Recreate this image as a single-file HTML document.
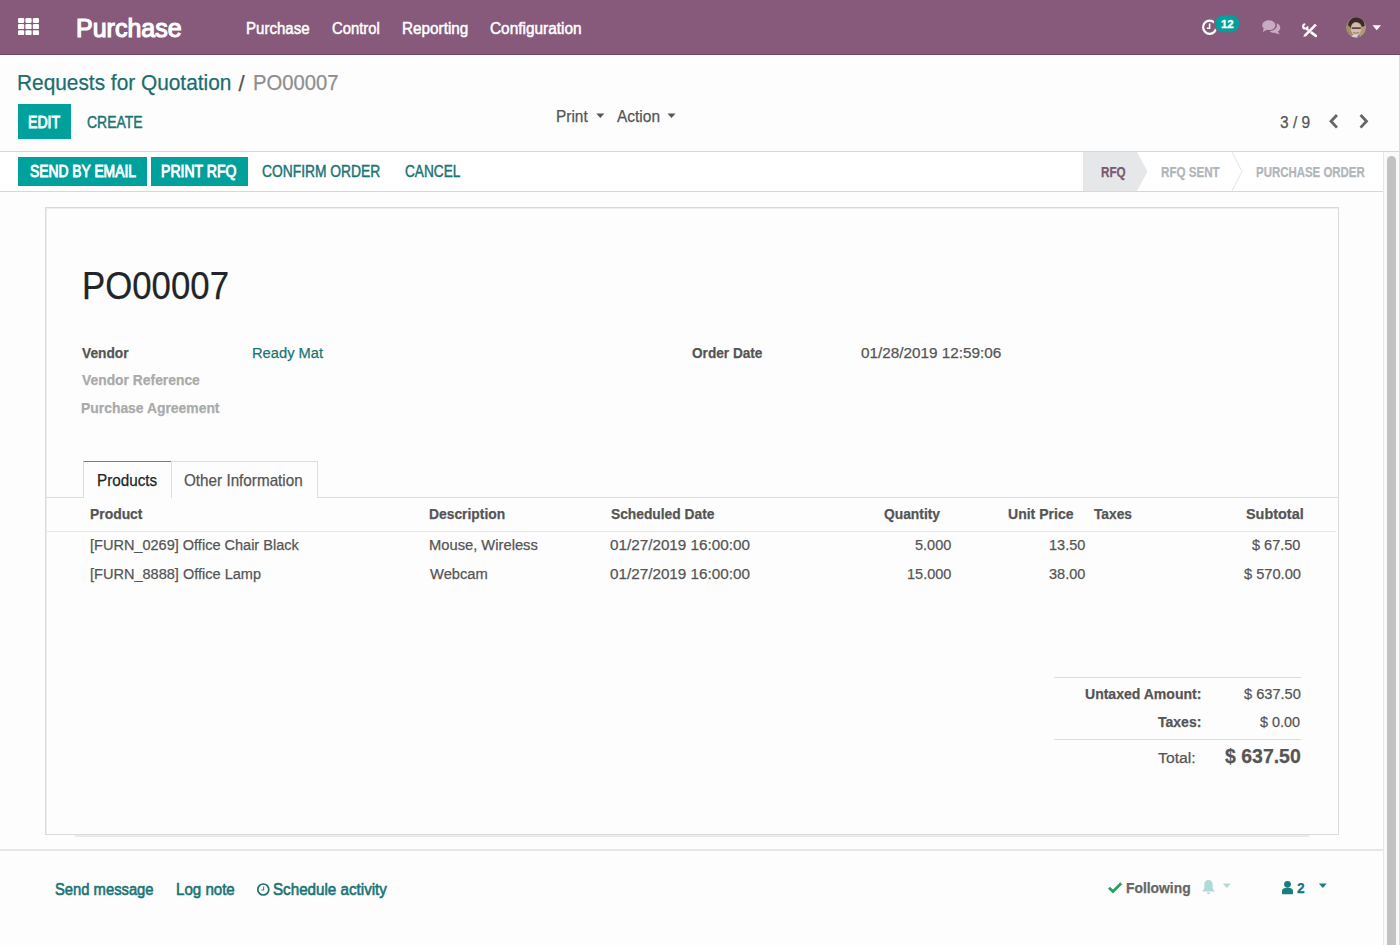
<!DOCTYPE html>
<html><head><meta charset="utf-8">
<style>
*{box-sizing:border-box;margin:0;padding:0}
html,body{width:1400px;height:945px;overflow:hidden;background:#fdfdfd;font-family:"Liberation Sans",sans-serif;color:#4c4c4c}
.a{position:absolute}
.t{position:absolute;white-space:nowrap;line-height:1;transform-origin:0 0;-webkit-text-stroke:0.25px currentColor}
.b{font-weight:bold}
.btn{position:absolute;background:#00a09d}
.hl{position:absolute;height:1px}
.vl{position:absolute;width:1px}
</style></head><body>
<!-- navbar -->
<div class="a" style="left:0;top:0;width:1400px;height:55px;background:#875a7b;border-bottom:1px solid #6b4a63"></div>
<svg class="a" style="left:18px;top:18px" width="21" height="17.2" viewBox="0 0 21 17.2"><g fill="#fff"><rect x="0.0" y="0.0" width="6.2" height="5" rx="1.2"/><rect x="7.4" y="0.0" width="6.2" height="5" rx="1.2"/><rect x="14.8" y="0.0" width="6.2" height="5" rx="1.2"/><rect x="0.0" y="6.1" width="6.2" height="5" rx="1.2"/><rect x="7.4" y="6.1" width="6.2" height="5" rx="1.2"/><rect x="14.8" y="6.1" width="6.2" height="5" rx="1.2"/><rect x="0.0" y="12.2" width="6.2" height="5" rx="1.2"/><rect x="7.4" y="12.2" width="6.2" height="5" rx="1.2"/><rect x="14.8" y="12.2" width="6.2" height="5" rx="1.2"/></g></svg>
<!-- right icons -->
<svg class="a" style="left:1200px;top:12px" width="45" height="26" viewBox="0 0 45 26">
<circle cx="9.7" cy="15.2" r="6.6" fill="none" stroke="#fff" stroke-width="2.2"/>
<path d="M9.6 11.5 V16.3 H6.8" fill="none" stroke="#fff" stroke-width="1.6"/>
<rect x="14.3" y="2.6" width="25.7" height="18.3" rx="9.1" fill="#00a09d" stroke="#875a7b" stroke-width="1.2"/>
<text x="27.2" y="16.4" text-anchor="middle" font-family="Liberation Sans" font-weight="bold" font-size="11.5" fill="#fff" stroke="#fff" stroke-width="0.4" letter-spacing="-0.2">12</text>
</svg>
<svg class="a" style="left:1261px;top:19px" width="21" height="18" viewBox="0 0 21 18">
<g fill="#c8aac1">
<ellipse cx="7.8" cy="6.2" rx="6.6" ry="4.9"/>
<path d="M2.6 9.5 L1.8 13 L6.5 10.5 Z"/>
<path d="M15.4 4.2 C18.3 5.1 19.7 7.3 19.2 9.6 C18.9 11 18 12 16.9 12.6 L18.7 15.6 L13.4 13.8 C11.2 14 9.5 13.3 8.5 12.1 C12.6 11.9 15.9 9.6 15.9 6.3 C15.9 5.6 15.7 4.8 15.4 4.2 Z"/>
</g></svg>
<svg class="a" style="left:1298px;top:18px" width="24" height="24" viewBox="0 0 24 24">
<path d="M9.2 11.2 L17.8 17.9" stroke="#fff" stroke-width="2.6" stroke-linecap="round" fill="none"/>
<circle cx="7.3" cy="8.4" r="3.2" fill="#fff"/>
<path d="M7.6 8.1 L6.9 3.8 L12 3.6 L11.9 8.6 Z" fill="#875a7b"/>
<circle cx="7.5" cy="8.2" r="1.2" fill="#875a7b"/>
<path d="M16.9 5.7 L18.8 7.6 L8.1 18.3 L5.4 19 L6.2 16.4 Z" fill="#fff" stroke="#875a7b" stroke-width="0.9" paint-order="stroke"/>
</svg>
<svg class="a" style="left:1346px;top:17px" width="20" height="21" viewBox="0 0 20 21">
<defs><clipPath id="av"><ellipse cx="10" cy="10.3" rx="9.9" ry="10.2"/></clipPath></defs>
<g clip-path="url(#av)">
<rect x="0" y="0" width="20" height="21" fill="#9b8468"/>
<rect x="13" y="6" width="7" height="12" fill="#b09a7c"/>
<rect x="0" y="9" width="6" height="10" fill="#a38c6e"/>
<path d="M2 8 C3 2 8 -0.5 12 0.5 C16 1.5 19 5 18.5 9 L16 10 C15 6 12 4.5 9 5 C6 5.5 5 8 5 11 Z" fill="#3a2b2b"/>
<ellipse cx="10" cy="12" rx="5.2" ry="6.5" fill="#d6bcb0"/>
<rect x="5.5" y="10.2" width="9.5" height="1.8" rx="0.8" fill="#5b4640"/>
<path d="M7 15.5 Q10 17 13 15.5" stroke="#8a6a60" stroke-width="0.9" fill="none"/>
<path d="M4 21 C5 18 8 17.5 10 17.5 C13 17.5 16 18.5 17 21 Z" fill="#d9d0d2"/>
<circle cx="13" cy="19.5" r="1.6" fill="#6f7890"/>
</g></svg>
<svg class="a" style="left:1372px;top:25px" width="10" height="6" viewBox="0 0 10 6"><path d="M0.5 0.3 H9 L4.75 5.2 Z" fill="#fff"/></svg>

<!-- EDIT button -->
<div class="btn" style="left:18px;top:104px;width:53px;height:35px"></div>
<!-- print/action carets -->
<svg class="a" style="left:596px;top:113px" width="9" height="6" viewBox="0 0 9 6"><path d="M0.3 0.5 H8.3 L4.3 5 Z" fill="#555"/></svg>
<svg class="a" style="left:667px;top:113px" width="9" height="6" viewBox="0 0 9 6"><path d="M0.5 0.5 H8.5 L4.5 5 Z" fill="#555"/></svg>
<!-- pager chevrons -->
<svg class="a" style="left:1327px;top:113px" width="12" height="17" viewBox="0 0 12 17"><path d="M9 3 L4 8.3 L9 13.6" fill="none" stroke="#666" stroke-width="2.8" stroke-linecap="square"/></svg>
<svg class="a" style="left:1358px;top:113px" width="12" height="17" viewBox="0 0 12 17"><path d="M3.5 3 L8.5 8.3 L3.5 13.6" fill="none" stroke="#666" stroke-width="2.8" stroke-linecap="square"/></svg>

<!-- content area -->
<div class="a" style="left:0;top:152px;width:1383px;height:793px;background:#fdfdfd"></div>
<div class="hl" style="left:0;top:151px;width:1400px;background:#d6d7da"></div>
<!-- statusbar -->
<div class="a" style="left:0;top:152px;width:1383px;height:39px;background:#fff"></div>
<div class="btn" style="left:18px;top:157px;width:129px;height:29px"></div>
<div class="btn" style="left:151px;top:157px;width:97px;height:29px"></div>
<svg class="a" style="left:1080px;top:152px" width="303" height="39" viewBox="0 0 303 39">
<path d="M3 0 H57 L67.5 19.5 L57 39 H3 Z" fill="#e6e7e9"/>
<path d="M152 0 L162 19.5 L152 39" fill="none" stroke="#e3e4e6" stroke-width="1"/>
</svg>
<div class="hl" style="left:0;top:191px;width:1383px;background:#d6d7da"></div>
<!-- scrollbar -->
<div class="vl" style="left:1383px;top:152px;height:793px;background:#e8e8e8"></div>
<div class="a" style="left:1384px;top:152px;width:16px;height:793px;background:#fafafa"></div>
<div class="a" style="left:1387px;top:156px;width:9px;height:800px;border-radius:5px;background:#c2c2c2"></div>
<div class="vl" style="left:1399px;top:55px;height:890px;background:#dcdcdc"></div>

<!-- sheet -->
<div class="a" style="left:45px;top:207px;width:1294px;height:628px;border:1px solid #d9dadd;box-shadow:inset 1px 1px 0 #eeeef0;background:#fdfdfd"></div>
<div class="hl" style="left:75px;top:835px;width:1234px;height:2px;background:linear-gradient(#f0f0f2,#e4e5e7)"></div>
<!-- tabs -->
<div class="hl" style="left:46px;top:497px;width:1292px;background:#dcdde0"></div>
<div class="a" style="left:83px;top:461px;width:89px;height:37px;background:#fdfdfd;border:1px solid #d9dadd;border-bottom:none;border-top:1px solid #85738a"></div>
<div class="a" style="left:171px;top:461px;width:147px;height:37px;border:1px solid #dcdde0;border-bottom:none;background:#fdfdfd"></div>
<div class="hl" style="left:46px;top:531px;width:1290px;background:#e6e7e9"></div>
<!-- totals lines -->
<div class="hl" style="left:1054px;top:677px;width:247px;background:#d8dddd"></div>
<div class="hl" style="left:1054px;top:739px;width:247px;background:#d8dddd"></div>

<!-- chatter -->
<div class="a" style="left:0;top:849px;width:1383px;height:2px;background:#e6e7e8"></div>
<svg class="a" style="left:256px;top:882px" width="15" height="15" viewBox="0 0 15 15">
<circle cx="7.3" cy="7.5" r="5.5" fill="none" stroke="#1a6e70" stroke-width="1.7"/>
<path d="M7.6 4.6 V8 H5.2" fill="none" stroke="#4f8384" stroke-width="1.2"/>
</svg>
<svg class="a" style="left:1107px;top:881px" width="16" height="13" viewBox="0 0 16 13"><path d="M2 6.8 L6 10.6 L14.2 2.2" fill="none" stroke="#28a060" stroke-width="2.8"/></svg>
<svg class="a" style="left:1201px;top:879px" width="15" height="16" viewBox="0 0 15 16"><path d="M7.5 1 C4.5 1 3.3 3.3 3.3 6 V9.6 L1.2 12.6 H13.8 L11.7 9.6 V6 C11.7 3.3 10.5 1 7.5 1 Z M5.8 13.5 A1.7 1.7 0 0 0 9.2 13.5 Z" fill="#b2d9d8"/></svg>
<svg class="a" style="left:1222px;top:883px" width="10" height="6" viewBox="0 0 10 6"><path d="M0.8 0.6 H8.8 L4.8 5 Z" fill="#b2d9d8"/></svg>
<svg class="a" style="left:1281px;top:880px" width="13" height="15" viewBox="0 0 13 15"><g fill="#17807f"><circle cx="6.5" cy="4.3" r="3.4"/><path d="M1 13.6 V11 C1 8.8 3 7.7 6.5 7.7 C10 7.7 12 8.8 12 11 V13.6 Q12 14.3 11.3 14.3 H1.7 Q1 14.3 1 13.6 Z"/></g></svg>
<svg class="a" style="left:1318px;top:883px" width="10" height="6" viewBox="0 0 10 6"><path d="M0.8 0.6 H8.8 L4.8 5 Z" fill="#17807f"/></svg>

<span id="brand" class="t" style="left:76.25px;top:15px;font-size:26px;letter-spacing:0.000px;transform:scaleX(0.9624);-webkit-text-stroke-width:1.2px;color:#fff">Purchase</span>
<span id="menu1" class="t" style="left:245.60px;top:21px;font-size:16px;letter-spacing:0.000px;transform:scaleX(0.9399);-webkit-text-stroke-width:0.5px;color:#fff">Purchase</span>
<span id="menu2" class="t" style="left:332.35px;top:21px;font-size:16px;letter-spacing:0.000px;transform:scaleX(0.9268);-webkit-text-stroke-width:0.5px;color:#fff">Control</span>
<span id="menu3" class="t" style="left:402.00px;top:21px;font-size:16px;letter-spacing:0.000px;transform:scaleX(0.9555);-webkit-text-stroke-width:0.5px;color:#fff">Reporting</span>
<span id="menu4" class="t" style="left:489.50px;top:21px;font-size:16px;letter-spacing:0.000px;transform:scaleX(0.9628);-webkit-text-stroke-width:0.5px;color:#fff">Configuration</span>
<span id="bc1" class="t" style="left:17.20px;top:72px;font-size:22px;letter-spacing:0.000px;transform:scaleX(0.9474);color:#1a6e70">Requests for Quotation</span>
<span id="bcs" class="t" style="left:238.60px;top:73px;font-size:22px;letter-spacing:0.000px;transform:scaleX(1.0000);color:#555">/</span>
<span id="bc2" class="t" style="left:252.62px;top:72px;font-size:22px;letter-spacing:0.000px;transform:scaleX(0.9213);color:#8f8f8f">PO00007</span>
<span id="edit" class="t" style="left:28.25px;top:115px;font-size:16px;letter-spacing:0.000px;transform:scaleX(0.8818);-webkit-text-stroke-width:0.9px;color:#fff">EDIT</span>
<span id="create" class="t" style="left:87.00px;top:115px;font-size:16px;letter-spacing:0.000px;transform:scaleX(0.8719);-webkit-text-stroke-width:0.45px;color:#1a7474">CREATE</span>
<span id="print" class="t" style="left:555.65px;top:109px;font-size:16px;letter-spacing:0.000px;transform:scaleX(0.9631);color:#555">Print</span>
<span id="action" class="t" style="left:617.00px;top:109px;font-size:16px;letter-spacing:0.000px;transform:scaleX(0.9665);color:#555">Action</span>
<span id="pager" class="t" style="left:1280.00px;top:115px;font-size:16px;letter-spacing:0.000px;transform:scaleX(0.9667);color:#555">3 / 9</span>
<span id="send" class="t" style="left:29.80px;top:164px;font-size:16px;letter-spacing:0.000px;transform:scaleX(0.8654);-webkit-text-stroke-width:0.9px;color:#fff">SEND BY EMAIL</span>
<span id="printrfq" class="t" style="left:161.25px;top:164px;font-size:16px;letter-spacing:0.000px;transform:scaleX(0.8791);-webkit-text-stroke-width:0.9px;color:#fff">PRINT RFQ</span>
<span id="confirm" class="t" style="left:262.35px;top:164px;font-size:16px;letter-spacing:0.000px;transform:scaleX(0.8642);-webkit-text-stroke-width:0.45px;color:#1a7474">CONFIRM ORDER</span>
<span id="cancel" class="t" style="left:405.00px;top:164px;font-size:16px;letter-spacing:0.000px;transform:scaleX(0.8533);-webkit-text-stroke-width:0.45px;color:#1a7474">CANCEL</span>
<span id="rfq" class="t b" style="left:1100.80px;top:165px;font-size:14px;letter-spacing:0.000px;transform:scaleX(0.8354);color:#7c5873">RFQ</span>
<span id="rfqsent" class="t b" style="left:1160.65px;top:165px;font-size:14px;letter-spacing:0.000px;transform:scaleX(0.8291);color:#b1b5ba">RFQ SENT</span>
<span id="po" class="t b" style="left:1255.65px;top:165px;font-size:14px;letter-spacing:0.000px;transform:scaleX(0.8177);color:#b1b5ba">PURCHASE ORDER</span>
<span id="title" class="t" style="left:81.80px;top:267px;font-size:38.5px;letter-spacing:0.000px;transform:scaleX(0.9036);color:#212529">PO00007</span>
<span id="vendor" class="t b" style="left:82.35px;top:345px;font-size:15.5px;letter-spacing:0.000px;transform:scaleX(0.8854);color:#555">Vendor</span>
<span id="readymat" class="t" style="left:251.65px;top:345px;font-size:15.5px;letter-spacing:0.000px;transform:scaleX(0.9487);color:#1a7474">Ready Mat</span>
<span id="vref" class="t b" style="left:82.40px;top:372px;font-size:15.5px;letter-spacing:0.000px;transform:scaleX(0.8938);color:#aaa">Vendor Reference</span>
<span id="pagr" class="t b" style="left:81.40px;top:400px;font-size:15.5px;letter-spacing:0.000px;transform:scaleX(0.8965);color:#aaa">Purchase Agreement</span>
<span id="odate" class="t b" style="left:691.80px;top:345px;font-size:15.5px;letter-spacing:0.000px;transform:scaleX(0.8793);color:#555">Order Date</span>
<span id="odval" class="t" style="left:861.00px;top:345px;font-size:15.5px;letter-spacing:0.000px;transform:scaleX(0.9871);color:#555">01/28/2019 12:59:06</span>
<span id="products" class="t" style="left:96.80px;top:472px;font-size:16.5px;letter-spacing:0.000px;transform:scaleX(0.9252);color:#212529">Products</span>
<span id="otherinfo" class="t" style="left:184.45px;top:472px;font-size:16.5px;letter-spacing:0.000px;transform:scaleX(0.9247);color:#555">Other Information</span>
<span id="h_product" class="t b" style="left:90.40px;top:506px;font-size:15.5px;letter-spacing:0.000px;transform:scaleX(0.8958);color:#555">Product</span>
<span id="h_desc" class="t b" style="left:428.80px;top:506px;font-size:15.5px;letter-spacing:0.000px;transform:scaleX(0.8939);color:#555">Description</span>
<span id="h_sched" class="t b" style="left:610.80px;top:506px;font-size:15.5px;letter-spacing:0.000px;transform:scaleX(0.8892);color:#555">Scheduled Date</span>
<span id="h_qty" class="t b" style="left:883.60px;top:506px;font-size:15.5px;letter-spacing:0.000px;transform:scaleX(0.8915);color:#555">Quantity</span>
<span id="h_up" class="t b" style="left:1008.00px;top:506px;font-size:15.5px;letter-spacing:0.000px;transform:scaleX(0.9053);color:#555">Unit Price</span>
<span id="h_tax" class="t b" style="left:1094.40px;top:506px;font-size:15.5px;letter-spacing:0.000px;transform:scaleX(0.8857);color:#555">Taxes</span>
<span id="h_sub" class="t b" style="left:1245.80px;top:506px;font-size:15.5px;letter-spacing:0.000px;transform:scaleX(0.9308);color:#555">Subtotal</span>
<span id="r1" class="t" style="left:90.45px;top:537px;font-size:15.5px;letter-spacing:0.000px;transform:scaleX(0.9368);color:#555">[FURN_0269] Office Chair Black</span>
<span id="r1d" class="t" style="left:428.80px;top:537px;font-size:15.5px;letter-spacing:0.000px;transform:scaleX(0.9499);color:#555">Mouse, Wireless</span>
<span id="r1s" class="t" style="left:609.80px;top:537px;font-size:15.5px;letter-spacing:0.000px;transform:scaleX(0.9840);color:#555">01/27/2019 16:00:00</span>
<span id="r1q" class="t" style="left:914.96px;top:537px;font-size:15.5px;letter-spacing:0.000px;transform:scaleX(0.9354);color:#555">5.000</span>
<span id="r1p" class="t" style="left:1048.96px;top:537px;font-size:15.5px;letter-spacing:0.000px;transform:scaleX(0.9354);color:#555">13.50</span>
<span id="r1sub" class="t" style="left:1252.00px;top:537px;font-size:15.5px;letter-spacing:0.000px;transform:scaleX(0.9354);color:#555">$ 67.50</span>
<span id="r2" class="t" style="left:90.45px;top:566px;font-size:15.5px;letter-spacing:0.000px;transform:scaleX(0.9378);color:#555">[FURN_8888] Office Lamp</span>
<span id="r2d" class="t" style="left:429.80px;top:566px;font-size:15.5px;letter-spacing:0.000px;transform:scaleX(0.9499);color:#555">Webcam</span>
<span id="r2s" class="t" style="left:609.80px;top:566px;font-size:15.5px;letter-spacing:0.000px;transform:scaleX(0.9840);color:#555">01/27/2019 16:00:00</span>
<span id="r2q" class="t" style="left:906.56px;top:566px;font-size:15.5px;letter-spacing:0.000px;transform:scaleX(0.9354);color:#555">15.000</span>
<span id="r2p" class="t" style="left:1048.96px;top:566px;font-size:15.5px;letter-spacing:0.000px;transform:scaleX(0.9354);color:#555">38.00</span>
<span id="r2sub" class="t" style="left:1243.60px;top:566px;font-size:15.5px;letter-spacing:0.000px;transform:scaleX(0.9440);color:#555">$ 570.00</span>
<span id="untaxed" class="t b" style="left:1085.00px;top:686px;font-size:15.5px;letter-spacing:0.000px;transform:scaleX(0.9050);color:#555">Untaxed Amount:</span>
<span id="untaxv" class="t" style="left:1243.60px;top:686px;font-size:15.5px;letter-spacing:0.000px;transform:scaleX(0.9418);color:#555">$ 637.50</span>
<span id="taxes" class="t b" style="left:1158.40px;top:714px;font-size:15.5px;letter-spacing:0.000px;transform:scaleX(0.9035);color:#555">Taxes:</span>
<span id="taxv" class="t" style="left:1260.00px;top:714px;font-size:15.5px;letter-spacing:0.000px;transform:scaleX(0.9309);color:#555">$ 0.00</span>
<span id="total" class="t" style="left:1158.40px;top:750px;font-size:15.5px;letter-spacing:0.000px;transform:scaleX(1.0171);color:#555">Total:</span>
<span id="totalv" class="t b" style="left:1225.00px;top:746px;font-size:20.5px;letter-spacing:0.000px;transform:scaleX(0.9494);color:#555">$ 637.50</span>
<span id="sendmsg" class="t" style="left:55.40px;top:882px;font-size:16px;letter-spacing:0.000px;transform:scaleX(0.9234);-webkit-text-stroke-width:0.6px;color:#1a7474">Send message</span>
<span id="lognote" class="t" style="left:175.55px;top:882px;font-size:16px;letter-spacing:0.000px;transform:scaleX(0.9436);-webkit-text-stroke-width:0.6px;color:#1a7474">Log note</span>
<span id="sched" class="t" style="left:273.00px;top:882px;font-size:16px;letter-spacing:0.000px;transform:scaleX(0.9487);-webkit-text-stroke-width:0.6px;color:#1a7474">Schedule activity</span>
<span id="following" class="t b" style="left:1125.60px;top:880px;font-size:15.5px;letter-spacing:0.000px;transform:scaleX(0.8932);color:#666">Following</span>
<span id="fcount" class="t b" style="left:1296.80px;top:880px;font-size:15.5px;letter-spacing:0.000px;transform:scaleX(0.8932);color:#1a7474">2</span>
</body></html>
